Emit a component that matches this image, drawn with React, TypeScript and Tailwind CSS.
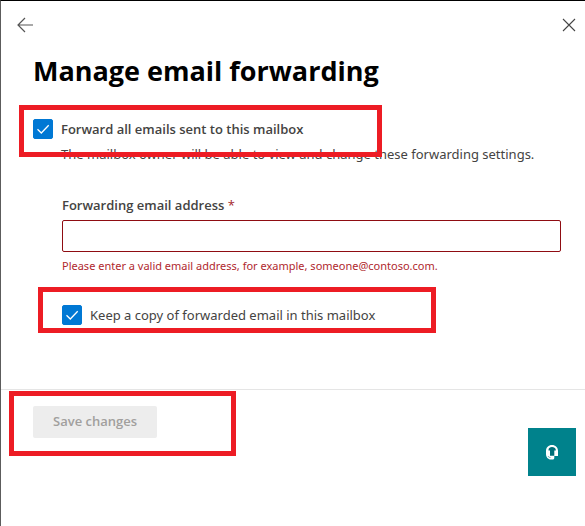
import { useState } from "react";

type CheckboxProps = {
    id: string;
    label: string;
    bold?: boolean;
};

function Checkbox({ id, label, bold }: CheckboxProps) {
    const [checked, setChecked] = useState(true);

    return (
        <div className="flex items-center gap-2">
            <span className="relative h-5 w-5 shrink-0">
                <input
                    id={id}
                    type="checkbox"
                    checked={checked}
                    onChange={(e) => setChecked(e.target.checked)}
                    className="block h-5 w-5 appearance-none rounded-xs border border-[#323130] bg-white checked:border-[#0078d4] checked:bg-[#0078d4]"
                />
                {checked && (
                    <svg viewBox="0 0 20 20" fill="none" stroke="white" strokeWidth="1.3" className="pointer-events-none absolute inset-0 h-5 w-5">
                        <path d="M4.5 10.2 8.3 14 15.7 6.3" />
                    </svg>
                )}
            </span>
            <label htmlFor={id} className={`text-[13px] leading-5 ${bold ? "font-['Open_Sans',sans-serif] font-semibold" : ""}`}>
                {label}
            </label>
        </div>
    );
}

// Red outline drawn over the step being pointed out
function Highlight({ className }: { className: string }) {
    return <div className={`pointer-events-none absolute z-10 border-5 border-[#ed1c24] ${className}`} />;
}

export default function App() {
    const [email, setEmail] = useState("");

    return (
        <div className="relative flex min-h-screen flex-col border-t border-l border-t-black border-l-[#5c5c5c] bg-white font-['Noto_Sans',sans-serif] text-[#444342]">
            <header className="flex items-center justify-between py-4 pr-2 pl-4">
                <button type="button" aria-label="Back">
                    <svg viewBox="0 0 16 16" fill="none" stroke="#555" className="h-4 w-4">
                        <path d="M16 8H1M8 1L1 8l7 7" strokeWidth="1.2" />
                    </svg>
                </button>
                <button type="button" aria-label="Close">
                    <svg viewBox="0 0 16 16" fill="none" stroke="#444" className="h-4 w-4">
                        <path d="M2 2l12 12M14 2L2 14" strokeWidth="1.1" />
                    </svg>
                </button>
            </header>

            <main className="pr-6 pl-8">
                <h1 className="pt-1 font-['Open_Sans',sans-serif] text-[27px] leading-9 font-bold text-black">
                    Manage email forwarding
                </h1>

                <section className="relative mt-[30px]">
                    <Highlight className="-top-3.5 -left-3.5 h-13 w-[363px]" />
                    <Checkbox id="forward-all" label="Forward all emails sent to this mailbox" bold />
                    <p className="mt-[5px] pl-7 text-[13px] leading-5">
                        The mailbox owner will be able to view and change these forwarding settings.
                    </p>
                </section>

                <div className="mt-[31px] pl-[29px]">
                    <label htmlFor="address" className="block font-['Open_Sans',sans-serif] text-[13px] leading-5 font-semibold">
                        Forwarding email address <span className="font-normal text-[#a4262c]">*</span>
                    </label>
                    <input
                        id="address"
                        type="email"
                        required
                        aria-invalid="true"
                        aria-describedby="address-error"
                        value={email}
                        onChange={(e) => setEmail(e.target.value)}
                        className="mt-[5px] block h-8 w-full rounded-xs border border-[#8f0c12] px-2 text-[13px] outline-none"
                    />
                    <p id="address-error" className="mt-1.5 text-[11px] leading-4 text-[#b0282e]">
                        Please enter a valid email address, for example, someone@contoso.com.
                    </p>

                    <section className="relative mt-[31px]">
                        <Highlight className="-top-[18px] -left-6 h-[46px] w-[398px]" />
                        <Checkbox id="keep-copy" label="Keep a copy of forwarded email in this mailbox" />
                    </section>
                </div>
            </main>

            <footer className="relative mt-16 border-t border-[#e5e5e5] py-4 pl-8">
                <Highlight className="top-px left-2 h-[65px] w-[227px]" />
                <button type="button" disabled className="h-8 rounded-xs bg-[#ededed] px-5 font-['Open_Sans',sans-serif] text-[13px] font-semibold text-[#a19f9d]">
                    Save changes
                </button>
            </footer>

            <button type="button" aria-label="Help and support" className="absolute right-[9px] bottom-[50px] flex h-12 w-12 items-center justify-center bg-[#00828c]">
                <svg viewBox="0 0 12 15" className="h-[15px] w-3">
                    <path d="M6 0C2.5 0 0 2.5 0 6v3c0 3 2 5.500 5 5.500h1.500c1.200 0 1.800-.6 1.800-1.500V11H12V6c0-3.500-2.500-6-6-6z" fill="white" />
                    <path d="M6 2C4 2 2.800 3 2.500 4.800V5.500H4V10.800h4.300V5.500h1.500V4.800C9.500 3 8 2 6 2z" fill="#006f78" />
                    <path d="M2 11c.5 1 1.200 1.500 2.500 1.500" fill="none" stroke="#00828c" strokeWidth=".6" />
                </svg>
            </button>
        </div>
    );
}
